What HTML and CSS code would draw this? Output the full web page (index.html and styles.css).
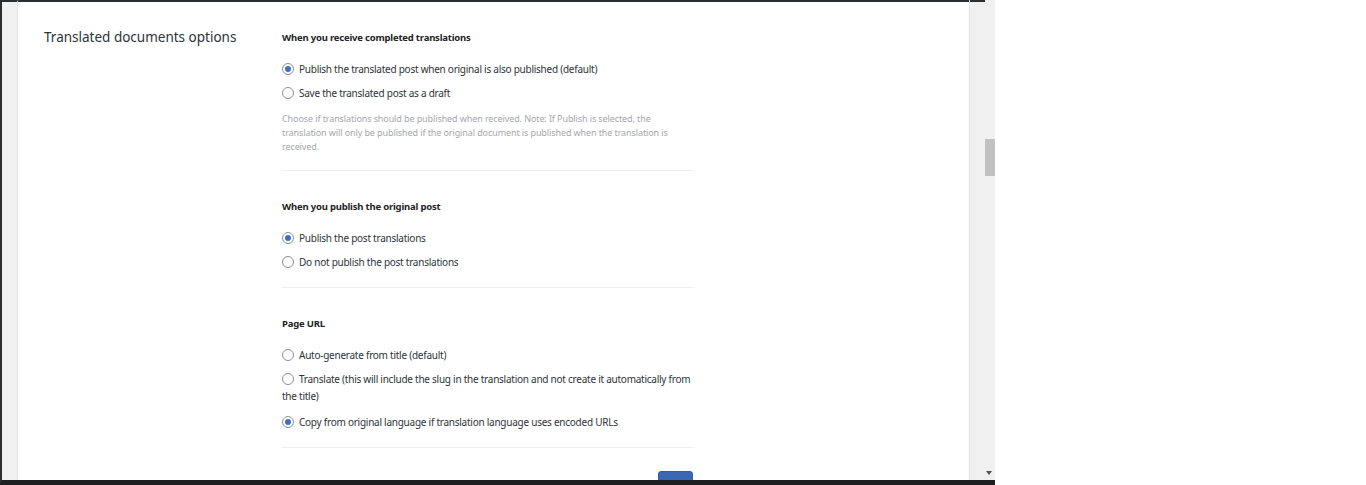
FILE: index.html
```html
<!DOCTYPE html>
<html>
<head>
<meta charset="utf-8">
<link rel="stylesheet" href="styles.css">
</head>
<body>
<div class="window">
  <div class="frame">
    <div class="gutter"></div>
    <div class="main">
      <div class="row">
        <h2 class="row-title">Translated documents options</h2>
        <div class="content">
          <section class="group">
            <h3 class="group-title">When you receive completed translations</h3>
            <label class="opt"><span class="radio checked"></span><span>Publish the translated post when original is also published (default)</span></label>
            <label class="opt"><span class="radio"></span><span>Save the translated post as a draft</span></label>
            <p class="desc">Choose if translations should be published when received. Note: If Publish is selected, the translation will only be published if the original document is published when the translation is received.</p>
          </section>
          <section class="group">
            <h3 class="group-title">When you publish the original post</h3>
            <label class="opt"><span class="radio checked"></span><span>Publish the post translations</span></label>
            <label class="opt"><span class="radio"></span><span>Do not publish the post translations</span></label>
          </section>
          <section class="group">
            <h3 class="group-title">Page URL</h3>
            <label class="opt"><span class="radio"></span><span>Auto-generate from title (default)</span></label>
            <label class="opt wrap"><span class="radio"></span>Translate (this will include the slug in the translation and not create it automatically from the title)</label>
            <label class="opt"><span class="radio checked"></span><span>Copy from original language if translation language uses encoded URLs</span></label>
          </section>
          <div class="actions"><button class="save">Save</button></div>
        </div>
      </div>
    </div>
    <div class="scrollbar">
      <div class="thumb"></div>
      <div class="arrow"></div>
    </div>
  </div>
</div>
</body>
</html>
```
FILE: styles.css
```css
html, body {
  margin: 0;
  padding: 0;
  background: #fff;
}
body {
  font-family: "Noto Sans", "Open Sans", sans-serif;
  color: #2c3338;
}
.window {
  width: 995px;
  height: 485px;
  box-sizing: border-box;
  border-left: 2px solid #2b2e31;
  border-bottom: 5px solid #1e1f21;
  overflow: hidden;
}
.frame {
  display: flex;
  height: 100%;
}
.gutter {
  width: 15px;
  flex: none;
  background: #f0f0f0;
  border-right: 1px solid #e4e4e4;
  border-top: 2px solid #2b2e31;
}
.main {
  flex: 1;
  border-top: 2px solid #2b2e31;
  overflow: hidden;
  background: #fff;
}
.row {
  display: flex;
  padding-top: 24px;
}
.row-title {
  width: 238px;
  flex: none;
  margin: 0;
  padding-left: 26px;
  font-size: 13.5px;
  font-weight: 400;
  line-height: 22px;
  color: #2c3338;
}
.content {
  width: 411px;
}
.group {
  border-bottom: 1px solid #eeeeee;
  padding-bottom: 12px;
  margin-bottom: 24px;
}
.group:first-child {
  padding-bottom: 16px;
}
.group-title {
  margin: 0 0 9px;
  padding-top: 1px;
  font-size: 9.5px;
  letter-spacing: -0.2px;
  font-weight: 700;
  line-height: 22px;
  color: #1d2327;
}
.opt {
  display: flex;
  align-items: flex-start;
  font-size: 10px;
  letter-spacing: -0.25px;
  line-height: 17px;
  padding: 3px 0 4px;
  color: #2c3338;
}
.opt.wrap {
  display: block;
  padding-bottom: 6px;
}
.radio {
  display: inline-block;
  box-sizing: border-box;
  width: 12px;
  height: 12px;
  border: 1px solid #8c8f94;
  border-radius: 50%;
  margin: 2px 5px 0 0;
  flex: none;
  vertical-align: -2px;
  position: relative;
}
.radio.checked::after {
  content: "";
  position: absolute;
  left: 2px;
  top: 2px;
  width: 6px;
  height: 6px;
  border-radius: 50%;
  background: #3d70c4;
}
.desc {
  margin: 6px 0 0;
  font-size: 9px;
  letter-spacing: -0.1px;
  line-height: 14px;
  color: #a4a8ac;
}
.actions {
  display: flex;
  justify-content: flex-end;
  margin-top: -1px;
}
.save {
  width: 35px;
  height: 28px;
  border: 1px solid #2f5fa8;
  border-radius: 3px;
  background: #3a68b4;
  color: #fff;
  font-size: 10px;
  padding: 0;
}
.scrollbar {
  width: 25px;
  flex: none;
  background: #f0f0f0;
  border-left: 1px solid #e2e2e2;
  position: relative;
}
.scrollbar::before {
  content: "";
  position: absolute;
  left: 0;
  top: 0;
  width: 15px;
  height: 2px;
  background: #2b2e31;
}
.thumb {
  position: absolute;
  left: 15px;
  top: 139px;
  width: 10px;
  height: 37px;
  background: #c1c1c1;
}
.arrow {
  position: absolute;
  left: 16px;
  bottom: 5px;
  width: 0;
  height: 0;
  border-left: 3px solid transparent;
  border-right: 3px solid transparent;
  border-top: 4px solid #505050;
}
```
